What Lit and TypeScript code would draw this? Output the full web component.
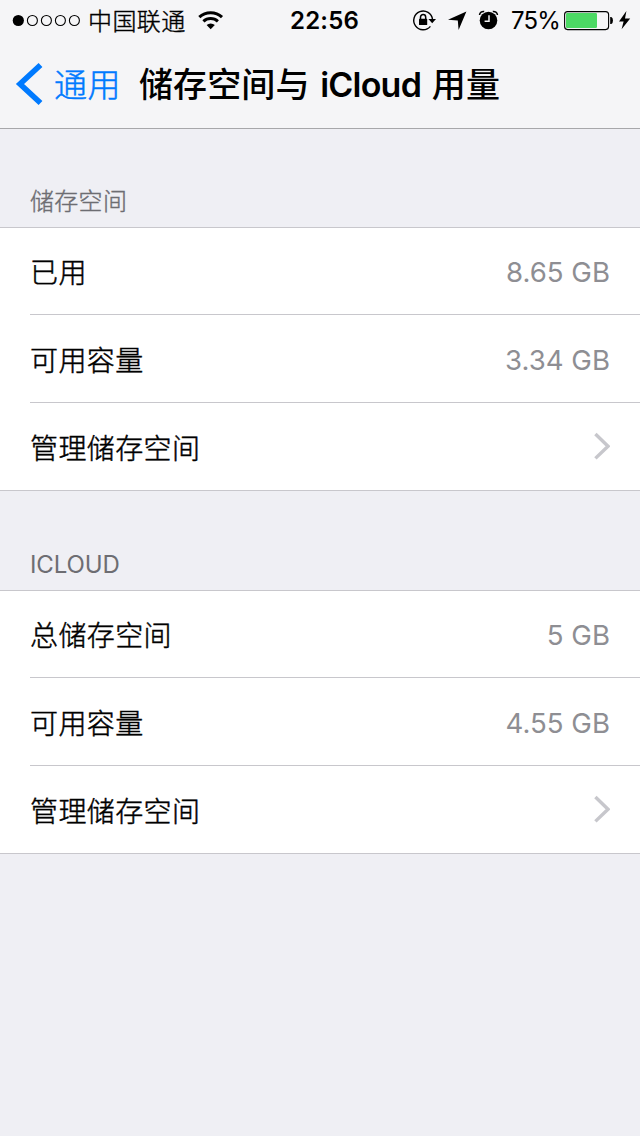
import { LitElement, html, css, svg } from "lit";
import { customElement, property } from "lit/decorators.js";

interface Row {
  label: string;
  value?: string;
}

@customElement("status-bar")
class StatusBar extends LitElement {
  static styles = css`
    :host {
      display: flex;
      height: 40px;
      color: #000;
      font-size: 24px;
      line-height: 42px;
      white-space: nowrap;
    }
    svg {
      display: block;
      height: 40px;
      flex: none;
    }
    span {
      flex: none;
    }
    .dots { width: 88px; }
    .carrier {
      width: 109px;
      letter-spacing: 0.4px;
      line-height: 43px;
      font-weight: 300;
      -webkit-text-stroke: 0.4px currentColor;
    }
    .wifi { width: 28px; }
    .time {
      width: 187px;
      box-sizing: border-box;
      padding-left: 65px;
      font-weight: 600;
      font-size: 24px;
      letter-spacing: 0.2px;
    }
    .lock { width: 28px; }
    .arrow { width: 30px; }
    .alarm { width: 41px; }
    .percent { width: 51px; letter-spacing: -0.9px; }
    .battery { width: 78px; }
  `;

  render() {
    return html`
      <svg class="dots" viewBox="0 0 88 40">
        <circle cx="18.3" cy="20.5" r="5.6" />
        ${[32.4, 46.4, 60.4, 74.4].map(
          (x) => svg`<circle cx=${x} cy="20.5" r="5" fill="none" stroke="#000" stroke-width="1.1" />`
        )}
      </svg>
      <span class="carrier">中国联通</span>
      <svg class="wifi" viewBox="197 0 28 40" fill="none" stroke="#000" stroke-width="3">
        <path d="M199.3 17.2A16.5 16.5 0 0 1 222 17.2" />
        <path d="M203.4 21.3A10.6 10.6 0 0 1 217.9 21.3" />
        <path d="M206.6 25A6 6 0 0 1 214.8 25L210.7 29.2Z" fill="#000" stroke="none" />
      </svg>
      <span class="time">22:56</span>
      <svg class="lock" viewBox="412 0 28 40">
        <path d="M430.4 26.4A9.4 9.4 0 1 1 432.5 19.4" fill="none" stroke="#000" stroke-width="1.4" />
        <path d="M428.4 19H436L432.2 23.2Z" />
        <rect x="419" y="18.8" width="8.2" height="6.2" rx=".6" />
        <path d="M420.5 19.2V17.2A2.6 2.6 0 0 1 425.7 17.2V19.2" fill="none" stroke="#000" stroke-width="1.5" />
      </svg>
      <svg class="arrow" viewBox="440 0 30 40">
        <path d="M466.4 11.6L458.6 30L457.8 20.5L448 19.7Z" />
      </svg>
      <svg class="alarm" viewBox="470 0 41 40">
        <circle cx="488.5" cy="20.5" r="8.8" />
        <path d="M489 15.2V21.2H484.6" fill="none" stroke="#f5f5f7" stroke-width="1.5" />
        <path d="M479.5 15A4 4 0 0 1 484.2 11.5M492.8 11.5A4 4 0 0 1 497.5 15" fill="none" stroke="#000" stroke-width="1.5" />
      </svg>
      <span class="percent">75%</span>
      <svg class="battery" viewBox="562 0 78 40">
        <rect x="564.6" y="11.6" width="44" height="18" rx="3" fill="none" stroke="#000" stroke-width="1.1" />
        <rect x="566" y="13" width="31" height="15" rx="1.2" fill="#4cd964" />
        <path d="M610.2 17H611.3Q613 17.6 613 20.5T611.3 24H610.2Z" />
        <path d="M626.4 11L619 21.4H623.6L621.6 29.2L630.2 18.5H625Z" />
      </svg>
    `;
  }
}

@customElement("nav-bar")
class NavBar extends LitElement {
  static styles = css`
    :host {
      display: flex;
      height: 88px;
      box-sizing: content-box;
      border-bottom: 1px solid #a7a7aa;
      line-height: 90px;
      font-size: 34px;
      white-space: nowrap;
    }
    svg {
      display: block;
      width: 54px;
      height: 88px;
      flex: none;
    }
    .back {
      width: 85px;
      flex: none;
      color: #007aff;
      font-size: 33px;
      font-weight: 300;
      letter-spacing: 0.5px;
      -webkit-text-stroke: 0.5px currentColor;
    }
    .title {
      color: #000;
      font-weight: 600;
      letter-spacing: -0.8px;
      word-spacing: 3px;
    }
    .cjk { font-weight: 500; letter-spacing: 0.1px; font-size: 34px; }
  `;

  render() {
    return html`
      <svg viewBox="0 40 54 88">
        <path d="M40.5 65L20 84L40.5 103" fill="none" stroke="#007aff" stroke-width="5.6" />
      </svg>
      <span class="back">通用</span>
      <span class="title"><span class="cjk">储存空间与</span> iCloud <span class="cjk">用量</span></span>
    `;
  }
}

@customElement("settings-group")
class SettingsGroup extends LitElement {
  @property() heading = "";
  @property({ attribute: false }) rows: Row[] = [];

  static styles = css`
    :host { display: block; }
    .heading {
      height: 36px;
      padding: 0 30px 8px;
      color: #6d6d72;
      font-size: 24px;
      font-weight: 300;
      letter-spacing: 0.3px;
      line-height: 37px;
      -webkit-text-stroke: 0.4px currentColor;
    }
    .heading.latin {
      font-weight: 400;
      letter-spacing: -0.1px;
      -webkit-text-stroke: 0;
    }
    .rows {
      border-top: 1px solid #c8c7cc;
      border-bottom: 1px solid #c8c7cc;
      background: #fff;
    }
    .row {
      display: flex;
      justify-content: space-between;
      box-sizing: border-box;
      height: 88px;
      margin-left: 30px;
      padding-right: 30px;
      border-bottom: 1px solid #c8c7cc;
      line-height: 92px;
      font-size: 28px;
      white-space: nowrap;
    }
    .row:first-child { height: 87px; line-height: 90px; }
    .row:last-child { height: 87px; border-bottom: 0; }
    .label {
      letter-spacing: 0.4px;
      font-weight: 300;
      -webkit-text-stroke: 0.45px currentColor;
    }
    .value { color: #8e8e93; font-size: 27.6px; line-height: 91px; }
    .row:first-child .value { line-height: 88px; }
    svg {
      display: block;
      width: 18px;
      height: 87px;
    }
  `;

  render() {
    const latin = /^[A-Z]+$/.test(this.heading);
    return html`
      <div class="heading ${latin ? "latin" : ""}">${this.heading}</div>
      <div class="rows">
        ${this.rows.map(
          (row) => html`<div class="row">
            <span class="label">${row.label}</span>
            ${row.value
              ? html`<span class="value">${row.value}</span>`
              : html`<svg viewBox="592 403 18 87">
                  <path d="M595.4 434L608 446.2L595.4 458.4" fill="none" stroke="#c7c7cc" stroke-width="3.4" />
                </svg>`}
          </div>`
        )}
      </div>
    `;
  }
}

@customElement("app-root")
class AppRoot extends LitElement {
  static styles = css`
    :host {
      display: block;
      width: 640px;
      height: 1136px;
      overflow: hidden;
      background: #efeff4;
      color: #000;
      font-family: Inter, "Noto Sans CJK SC", sans-serif;
    }
    .top { background: #f5f5f7; }
    .groups {
      display: flex;
      flex-direction: column;
      gap: 55px;
      padding-top: 54px;
    }
  `;

  private storage: Row[] = [
    { label: "已用", value: "8.65 GB" },
    { label: "可用容量", value: "3.34 GB" },
    { label: "管理储存空间" },
  ];

  private cloud: Row[] = [
    { label: "总储存空间", value: "5 GB" },
    { label: "可用容量", value: "4.55 GB" },
    { label: "管理储存空间" },
  ];

  render() {
    return html`
      <div class="top">
        <status-bar></status-bar>
        <nav-bar></nav-bar>
      </div>
      <div class="groups">
        <settings-group heading="储存空间" .rows=${this.storage}></settings-group>
        <settings-group heading="ICLOUD" .rows=${this.cloud}></settings-group>
      </div>
    `;
  }
}
